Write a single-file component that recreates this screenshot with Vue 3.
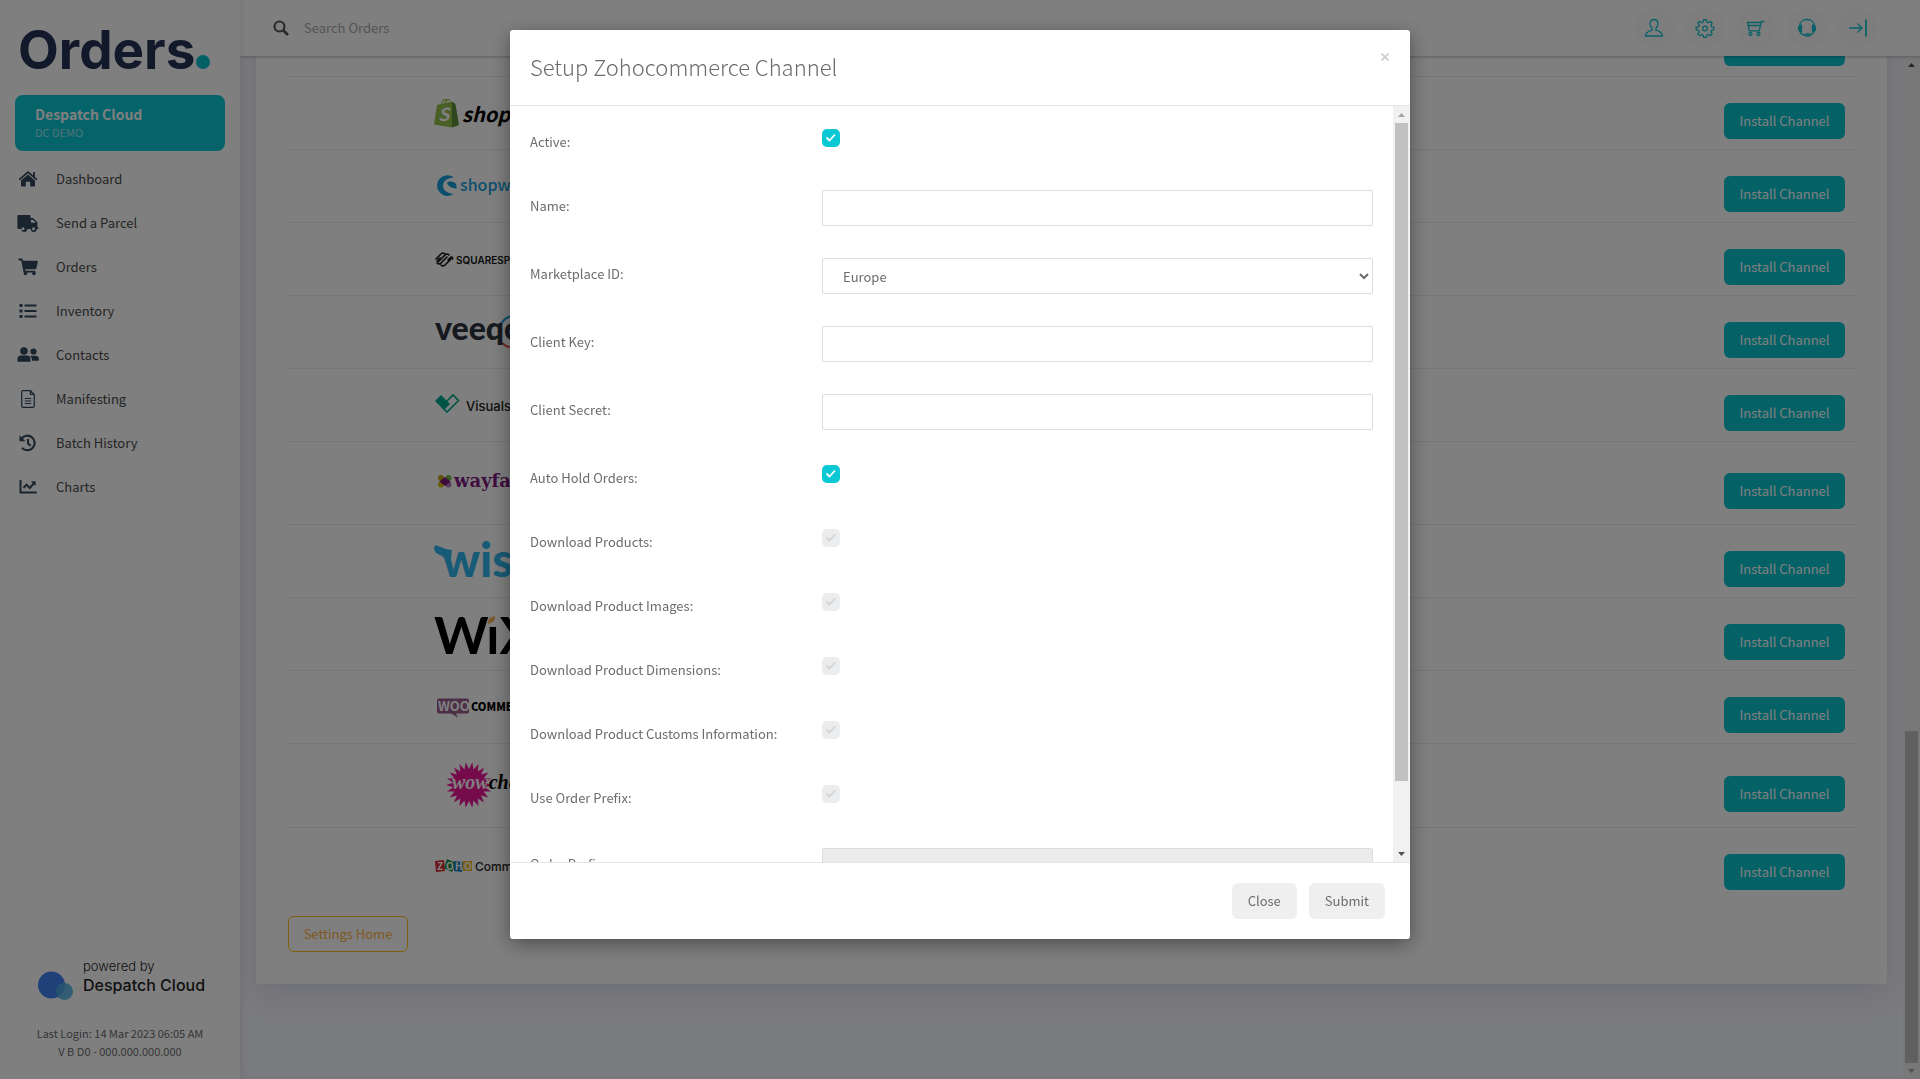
<script setup>
import { ref } from 'vue'

const navItems = [
  { icon: 'home', label: 'Dashboard' },
  { icon: 'truck', label: 'Send a Parcel' },
  { icon: 'cart', label: 'Orders' },
  { icon: 'list', label: 'Inventory' },
  { icon: 'users', label: 'Contacts' },
  { icon: 'file', label: 'Manifesting' },
  { icon: 'history', label: 'Batch History' },
  { icon: 'chart', label: 'Charts' },
]

const tools = [
  { id: 'user', label: 'Account' },
  { id: 'gear', label: 'Settings' },
  { id: 'basket', label: 'Basket' },
  { id: 'headset', label: 'Support' },
  { id: 'exit', label: 'Log out' },
]

const channels = [
  { id: 'previous', height: 52 },
  { id: 'shopify', height: 52 },
  { id: 'shopware', height: 52 },
  { id: 'squarespace', height: 52 },
  { id: 'veeqo', height: 52 },
  { id: 'visualsoft', height: 52 },
  { id: 'wayfair', height: 62 },
  { id: 'wish', height: 52 },
  { id: 'wix', height: 52 },
  { id: 'woocommerce', height: 52 },
  { id: 'wowcher', height: 63 },
  { id: 'zoho', height: 52 },
]

const toggles = [
  { id: 'hold', label: 'Auto Hold Orders:', disabled: false },
  { id: 'products', label: 'Download Products:', disabled: true },
  { id: 'images', label: 'Download Product Images:', disabled: true },
  { id: 'dimensions', label: 'Download Product Dimensions:', disabled: true },
  { id: 'customs', label: 'Download Product Customs Information:', disabled: true },
  { id: 'usePrefix', label: 'Use Order Prefix:', disabled: true },
]

const marketplace = ref('Europe')

const burst = Array.from({ length: 44 }, (_, i) => {
  const r = i % 2 ? 16 : 23
  const a = (i * Math.PI) / 22
  return `${(35 + r * Math.cos(a)).toFixed(1)},${(31 + r * Math.sin(a)).toFixed(1)}`
}).join(' ')
</script>

<template>
  <div class="app">
    <aside class="sidebar">
      <div class="brand">Orders<span class="brand-dot"></span></div>
      <div class="account">
        <strong>Despatch Cloud</strong>
        <span>DC DEMO</span>
      </div>
      <nav class="nav">
        <a v-for="item in navItems" :key="item.label" href="#">
          <svg width="24" height="20" viewBox="0 0 24 20" aria-hidden="true">
            <template v-if="item.icon === 'home'">
              <path d="M12 5.500 5 11.600V17q0 .6.6.6h4.200v-4.800h4.400v4.800h4.200q.6 0 .6-.6v-5.400z" />
              <path d="m3.200 10.600 8.800-7.500 8.800 7.500M18 3v4.500" fill="none" stroke="currentColor" stroke-width="1.800" />
            </template>
            <template v-else-if="item.icon === 'truck'">
              <path fill-rule="evenodd" d="M2.500 2h11q1 0 1 1v2h2.200q.6 0 1 .5l3.300 3.400q.4.4.4 1v4.300h1v1.800h-1.700a3 3 0 0 1-6 0h-3.400a3 3 0 0 1-6 0H2.300q-.9 0-.9-.9V3q0-1 1.100-1zm12.500 4.700v3.100h4.800l-3-3.100z" />
              <circle cx="7" cy="15.800" r="1.500" fill="#fff" />
              <circle cx="17.500" cy="15.800" r="1.500" fill="#fff" />
            </template>
            <template v-else-if="item.icon === 'cart'">
              <path d="M2.500 1.500h3.300q.7 0 .9.700l.3 1.600h14.200q.8 0 .6.9l-1.500 6.800q-.2.700-.9.700H9.200l.3 1.600h9.300q.6 0 .5.700l-.3 1H8.300q-.7 0-.8-.6L5.200 3.500H2.500z" />
              <circle cx="9.500" cy="16.500" r="1.800" /><circle cx="18" cy="16.500" r="1.800" />
            </template>
            <template v-else-if="item.icon === 'list'">
              <path d="M3.500 3h3v3h-3zM3.500 8.500h3v3h-3zM3.500 14h3v3h-3zM8.500 3.500h12v2h-12zM8.500 9h12v2h-12zM8.500 14.500h12v2h-12z" />
            </template>
            <template v-else-if="item.icon === 'users'">
              <circle cx="8" cy="6" r="3.800" /><circle cx="17.500" cy="6.500" r="3.100" />
              <path d="M1.500 16v-2q0-3.500 3.500-3.500h6q3.500 0 3.500 3.500v2q0 .8-.8.800H2.300q-.8 0-.8-.8zM16 15.800h6.200q.6 0 .6-.6V14q0-3.300-3.300-3.300h-3.700q-1 0-1.700.4 1.900 1.300 1.900 4z" />
            </template>
            <template v-else-if="item.icon === 'file'">
              <path d="M14.500 1.700H7Q5.700 1.700 5.700 3v14q0 1.300 1.300 1.300h10q1.300 0 1.300-1.300V5.500zM14.500 1.700v3.800h3.800M8.800 9.500h6.400M8.800 12h6.400M8.800 14.500h6.400" fill="none" stroke="currentColor" stroke-width="1.200" />
            </template>
            <template v-else-if="item.icon === 'history'">
              <path d="M5.600 5.500A7.300 7.300 0 1 1 6 14.900M12 6v4.500l2.700 2.200" fill="none" stroke="currentColor" stroke-width="2.100" />
              <path d="M3.500 2.200v6h6z" />
            </template>
            <template v-else>
              <path d="M4.500 3v12.500h16.200" fill="none" stroke="currentColor" stroke-width="2" />
              <path d="m7.500 10.700 3-3 3.300 3.300 4-4.500" fill="none" stroke="currentColor" stroke-width="2" />
              <path d="M14.800 4.200h4.900v4.900z" />
            </template>
          </svg>
          {{ item.label }}
        </a>
      </nav>
      <div class="sidebar-foot">
        <div class="powered">
          <svg width="36" height="30" viewBox="0 0 36 30" aria-hidden="true">
            <circle cx="13.500" cy="14" r="13.500" fill="#4080f4" />
            <circle cx="26.500" cy="20.500" r="8.500" fill="#4aaee0" opacity=".85" />
          </svg>
          <div>
            <div class="powered-by">powered by</div>
            <div class="powered-name">Despatch Cloud</div>
          </div>
        </div>
        <p>Last Login: 14 Mar 2023 06:05 AM</p>
        <p>V B D0 - 000.000.000.000</p>
      </div>
    </aside>

    <div class="page">
      <header class="topbar">
        <label class="search">
          <svg width="16" height="16" viewBox="0 0 16 16" aria-hidden="true">
            <circle cx="6.500" cy="6.500" r="5" fill="none" stroke="#555" stroke-width="2.200" />
            <path d="m10 10 5 5" stroke="#555" stroke-width="2.600" />
          </svg>
          <input type="text" placeholder="Search Orders" aria-label="Search Orders" />
        </label>
        <div class="tools">
          <button v-for="tool in tools" :key="tool.id" type="button" :aria-label="tool.label">
            <svg width="20" height="20" viewBox="0 0 20 20" fill="none" stroke="currentColor" stroke-width="1.300" aria-hidden="true">
              <path v-if="tool.id === 'user'" d="M10 1.500c2.600 0 3.900 1.700 3.900 4.200 0 2-.9 3.700-2 4.600v1.900c2.800.6 6 2 6.600 5.800h-17c.6-3.800 3.800-5.200 6.600-5.800v-1.900c-1.100-.9-2-2.600-2-4.600 0-2.500 1.300-4.200 3.900-4.200z" />
              <template v-else-if="tool.id === 'gear'">
                <path d="M8.700 1.700h2.600l.5 2.300 1.600.7 2-1.300 1.800 1.800-1.300 2 .7 1.600 2.200.4v2.600l-2.200.5-.7 1.600 1.300 2-1.800 1.800-2-1.300-1.600.7-.5 2.300H8.700l-.5-2.300-1.600-.7-2 1.300-1.800-1.800 1.300-2-.7-1.600-2.200-.5V9.200l2.200-.4.7-1.600-1.300-2 1.800-1.800 2 1.300 1.600-.7z" />
                <circle cx="10" cy="10.500" r="2.300" />
              </template>
              <template v-else-if="tool.id === 'basket'">
                <path d="M18.500 3.500h-3l-2.300 9.300H3.300L1.500 4.500h13.400M2.200 7.500h12" />
                <circle cx="4.500" cy="16" r="1.500" /><circle cx="12.500" cy="16" r="1.500" />
              </template>
              <template v-else-if="tool.id === 'headset'">
                <path d="M2.500 7.500C3 4 6 1.500 10 1.500s7 2.500 7.500 6M2.800 13.500c.7 2 2.700 3.500 5.700 3.500M17.200 13.500c-.7 1.500-1.900 2.800-3.400 3.300" />
                <path d="M4.500 7.200v6.300q-3 0-3-3.100t3-3.200zM15.500 7.200v6.300q3 0 3-3.100t-3-3.200z" fill="currentColor" />
                <rect x="8.500" y="16" width="5" height="2" rx="1" />
              </template>
              <template v-else>
                <path d="M1 10h13M9.500 5.500 14 10l-4.500 4.500" />
                <path d="M18 1.500v17" stroke-width="1.800" />
              </template>
            </svg>
          </button>
        </div>
      </header>

      <div class="viewport">
        <main class="content">
          <section class="card">
            <div v-for="channel in channels" :key="channel.id" class="channel">
              <svg width="180" :height="channel.height" :viewBox="`0 0 180 ${channel.height}`" aria-hidden="true">
                <template v-if="channel.id === 'shopify'">
                  <path d="M7.500 17c1-4.500 3.500-5.500 5.500-4M11 16c1-3 3-4.500 5-2.500" fill="none" stroke="#95bf47" stroke-width="1.200" />
                  <path d="m3 18 15-3.500v26L0 37.500z" fill="#95bf47" />
                  <path d="m18 14.500 3.500 2.500L25 38l-7 2.500z" fill="#5e8e3e" />
                  <text x="4" y="34" class="src" font-size="18" font-weight="700" font-style="italic" fill="#fff">S</text>
                  <text x="28" y="35" class="src" font-size="20" font-weight="700" font-style="italic" fill="#000">shopify</text>
                </template>
                <template v-else-if="channel.id === 'shopware'">
                  <path d="M20 17.500A10.400 10.400 0 1 0 19.500 34C12 33 9 29.500 9 25.500c0-5 5-7.500 11-8z" fill="#189eda" />
                  <path d="M13 22.500c3-2 9-.5 9.500 3v3.500c-3-1-9-2-9.500-6.500z" fill="#189eda" />
                  <text x="26" y="31" class="src" font-size="16" font-weight="500" fill="#189eda">shopware</text>
                </template>
                <template v-else-if="channel.id === 'squarespace'">
                  <g fill="none" stroke="#111" stroke-width="1.600" stroke-linecap="round">
                    <path d="m2 26 5-5q2-2 4 0M4 29l7-7q2-2 4 0" />
                    <path d="m6 25-3 3M13 24l-6 6q-2 2-4 0M17 26l-6 6q-2 2-4 0M14 27l3-3q2 0 1.500 2" />
                  </g>
                  <text x="22" y="31" font-family="Inter, sans-serif" font-size="10" font-weight="600" fill="#111">SQUARESPACE</text>
                </template>
                <template v-else-if="channel.id === 'veeqo'">
                  <path d="M66 20c3-7 10-11 19-11" fill="none" stroke="#189eda" stroke-width="2" />
                  <path d="M68 37c4 4 9 5 15 5" fill="none" stroke="#e0533d" stroke-width="2" />
                  <text x="1" y="34" font-family="Lato, sans-serif" font-size="32" font-weight="900" fill="#2c353f">veeqo</text>
                </template>
                <template v-else-if="channel.id === 'visualsoft'">
                  <path d="m1 22 6-6 6 6 3 3-6 6z" fill="#00a88f" />
                  <path d="m12 23 7-7 5.500 5.500L13 33l-5-5" fill="none" stroke="#00a88f" stroke-width="1.600" />
                  <text x="32" y="32" font-family="Inter, sans-serif" font-size="13" font-weight="500" fill="#222">Visualsoft</text>
                </template>
                <template v-else-if="channel.id === 'wayfair'">
                  <circle cx="7" cy="26" r="3" fill="#b9a70d" /><circle cx="14.500" cy="26" r="3" fill="#72b84c" />
                  <circle cx="7" cy="32.500" r="3" fill="#d5b900" /><circle cx="14.500" cy="32.500" r="3" fill="#b47abd" />
                  <path d="m11 25 5.500 4.500L11 34l-5.500-4.500z" fill="#7f187f" />
                  <text x="20" y="35" font-family="DejaVu Serif, serif" font-size="18" font-weight="700" fill="#7f187f">wayfair</text>
                </template>
                <template v-else-if="channel.id === 'wish'">
                  <path d="M0 13q1-4 4-2 6 3 14 4l-1 9-6 1q-1-4-5-5-6-2-6-7z" fill="#2fb7ec" />
                  <text x="8" y="42" font-family="Lato, sans-serif" font-size="47" font-weight="900" fill="#2fb7ec">wish</text>
                </template>
                <template v-else-if="channel.id === 'wix'">
                  <text x="0" y="46" font-family="Lato, sans-serif" font-size="52" font-weight="700" fill="#000">W&#305;X</text>
                  <path d="M54 16q-1-7 7-8 1 6-7 8z" fill="#fbb364" />
                </template>
                <template v-else-if="channel.id === 'woocommerce'">
                  <path d="M5 17.500h28q2 0 2 2v11q0 2-2 2H22l2 4-7-4H5q-2 0-2-2v-11q0-2 2-2z" fill="#9b5c8f" />
                  <text x="4" y="30" class="src" font-size="13" font-weight="700" fill="#fff">WOO</text>
                  <text x="37" y="30" class="src" font-size="11" font-weight="900" fill="#000">COMMERCE</text>
                </template>
                <template v-else-if="channel.id === 'wowcher'">
                  <polygon :points="burst" fill="#ec1699" />
                  <text x="18" y="35" font-family="Liberation Serif, serif" font-size="20" font-weight="700" font-style="italic" fill="#fff">wow<tspan fill="#000">cher</tspan></text>
                </template>
                <template v-else-if="channel.id === 'zoho'">
                  <path d="m1 23 9-1 1 11-9 1z" fill="#d8292f" /><path d="m13 21 9 4-4 9-8-4z" fill="#149447" />
                  <path d="m20 23 9 1-1 10-8-1z" fill="#1b7fc4" /><path d="M29 23h9v10h-9z" fill="#f0b71c" />
                  <g class="src" font-size="10" font-weight="700" fill="#fff">
                    <text x="3" y="32">Z</text><text x="12" y="32">O</text><text x="21" y="32">H</text><text x="30" y="32">O</text>
                  </g>
                  <text x="41" y="33" font-family="Inter, sans-serif" font-size="12" font-weight="500" fill="#222">Commerce</text>
                </template>
              </svg>
              <button type="button" class="btn btn-install">Install Channel</button>
            </div>
            <button type="button" class="btn btn-home">Settings Home</button>
          </section>
        </main>
        <div class="scrollbar" aria-hidden="true">
          <i class="arrow up"></i>
          <div class="track"><div class="thumb" :style="{ marginTop: '658px', height: '332px' }"></div></div>
          <i class="arrow down faint"></i>
        </div>
      </div>
    </div>

    <div class="backdrop">
      <form class="modal" role="dialog" aria-labelledby="modal-title" @submit.prevent>
        <div class="modal-head">
          <h1 id="modal-title">Setup Zohocommerce Channel</h1>
          <button type="button" class="dismiss" aria-label="Close dialog">
            <svg width="8" height="8" viewBox="0 0 8 8" aria-hidden="true"><path d="m.5.5 7 7m0-7-7 7" stroke="#ccc" stroke-width="1.600" /></svg>
          </button>
        </div>
        <div class="modal-body">
          <div class="fields">
            <div class="field">
              <label for="active">Active:</label>
              <input id="active" type="checkbox" checked />
            </div>
            <div class="field">
              <label for="name">Name:</label>
              <input id="name" type="text" />
            </div>
            <div class="field">
              <label for="marketplace">Marketplace ID:</label>
              <select id="marketplace" v-model="marketplace"><option>Europe</option></select>
            </div>
            <div class="field">
              <label for="key">Client Key:</label>
              <input id="key" type="text" />
            </div>
            <div class="field">
              <label for="secret">Client Secret:</label>
              <input id="secret" type="text" />
            </div>
            <div class="toggles">
              <div v-for="toggle in toggles" :key="toggle.id" class="field">
                <label :for="toggle.id">{{ toggle.label }}</label>
                <input :id="toggle.id" type="checkbox" checked :disabled="toggle.disabled" />
              </div>
            </div>
            <div class="field">
              <label for="prefix">Order Prefix:</label>
              <input id="prefix" type="text" disabled />
            </div>
          </div>
          <div class="scrollbar" aria-hidden="true">
            <i class="arrow up faint"></i>
            <div class="track"><div class="thumb" :style="{ height: '658px' }"></div></div>
            <i class="arrow down"></i>
          </div>
        </div>
        <div class="modal-foot">
          <button type="button" class="btn btn-plain">Close</button>
          <button type="submit" class="btn btn-plain">Submit</button>
        </div>
      </form>
    </div>
  </div>
</template>

<style>
body {
  margin: 0;
}
</style>

<style scoped>
.app,
.app * {
  box-sizing: border-box;
}
.app {
  display: flex;
  height: 100vh;
  overflow: hidden;
  background: #f5f6fd;
  color: #6c6c6c;
  font: 13px/20px "Noto Sans CJK SC", sans-serif;
}
.app button,
.app input,
.app select {
  font: inherit;
  color: inherit;
}
.src {
  font-family: "Noto Sans CJK SC", sans-serif;
}

/* Sidebar */
.sidebar {
  display: flex;
  flex-direction: column;
  flex: 0 0 240px;
  background: #fff;
  box-shadow: 0 0 8px rgba(40, 50, 90, 0.14);
  z-index: 2;
}
.brand {
  display: flex;
  align-items: baseline;
  height: 95px;
  padding: 18px 0 0 18px;
  color: #243357;
  font: 700 53px/64px Inter, sans-serif;
}
.brand-dot {
  width: 14px;
  height: 14px;
  margin-left: 1px;
  border-radius: 50%;
  background: #06c0c8;
}
.account {
  display: flex;
  flex-direction: column;
  height: 56px;
  margin: 0 15px;
  padding: 9px 20px;
  border-radius: 8px;
  background: #0ac8d4;
  color: #fff;
}
.account strong {
  font-size: 14px;
  line-height: 20px;
}
.account span {
  font-size: 11px;
  line-height: 16px;
  opacity: 0.6;
}
.nav {
  display: flex;
  flex-direction: column;
  margin-top: 6px;
}
.nav a {
  display: flex;
  align-items: center;
  gap: 16px;
  height: 44px;
  padding-left: 16px;
  color: #4a4a4a;
  text-decoration: none;
}
.nav svg {
  color: #34495e;
  fill: currentColor;
}
.sidebar-foot {
  margin-top: auto;
  padding-bottom: 19px;
  text-align: center;
}
.sidebar-foot p {
  margin: 0;
  font-size: 11px;
  line-height: 18px;
}
.powered {
  display: flex;
  align-items: flex-end;
  gap: 9px;
  padding-left: 38px;
  margin-bottom: 23px;
  color: #222;
  text-align: left;
  font-family: Inter, sans-serif;
}
.powered-by {
  font-size: 13px;
  line-height: 18px;
  font-weight: 300;
}
.powered-name {
  padding-bottom: 6px;
  font-size: 16px;
  line-height: 20px;
  font-weight: 500;
}

/* Top bar */
.page {
  display: flex;
  flex: 1;
  flex-direction: column;
  min-width: 0;
}
.topbar {
  display: flex;
  align-items: center;
  justify-content: space-between;
  flex: 0 0 56px;
  padding: 0 42px 0 33px;
  background: #fff;
  box-shadow: 0 1px 3px rgba(0, 0, 0, 0.25);
  z-index: 1;
}
.search {
  display: flex;
  align-items: center;
  gap: 15px;
}
.search input {
  width: 200px;
  padding: 0;
  border: 0;
  background: none;
}
.search input::placeholder {
  color: #aaa;
}
.tools {
  display: flex;
  gap: 11px;
}
.app .tools button {
  display: grid;
  place-items: center;
  width: 40px;
  height: 40px;
  padding: 0;
  border: 0;
  border-radius: 50%;
  background: #fafafa;
  color: #14c4d0;
}

/* Channel list */
.viewport {
  display: flex;
  flex: 1;
  min-height: 0;
}
.content {
  display: flex;
  flex: 1;
  flex-direction: column;
  justify-content: flex-end;
  padding: 0 16px 95px;
  overflow: hidden;
}
.card {
  padding: 32px;
  border-radius: 2px;
  background: #fff;
  box-shadow: 0 8px 30px rgba(40, 50, 90, 0.12);
}
.channel {
  display: flex;
  align-items: center;
  justify-content: space-between;
  padding: 10px 10px 10px 146px;
  border-top: 1px solid #ebebeb;
}
.channel svg {
  display: block;
  overflow: visible;
}
.channel .btn {
  margin-top: 16px;
}
.btn {
  height: 36px;
  padding: 0;
  border: 1px solid transparent;
  border-radius: 6px;
}
.app .btn-install {
  width: 121px;
  background: #08c4ce;
  color: #fff;
}
.app .btn-home {
  width: 120px;
  margin-top: 16px;
  border-color: #fdbe12;
  background: none;
  color: #fdb13c;
}

/* Scrollbars */
.scrollbar {
  display: flex;
  flex: 0 0 17px;
  flex-direction: column;
  align-items: center;
  background: #f1f1f1;
}
.track {
  flex: 1;
  min-height: 0;
  width: 13px;
}
.thumb {
  background: #c1c1c1;
}
.arrow {
  width: 7px;
  height: 4px;
  margin: 7px 0 6px;
  background: #505050;
}
.arrow.up {
  clip-path: polygon(50% 0, 100% 100%, 0 100%);
}
.arrow.down {
  clip-path: polygon(0 0, 100% 0, 50% 100%);
}
.arrow.faint {
  background: #a3a3a3;
}

/* Dialog */
.backdrop {
  position: fixed;
  inset: 0;
  z-index: 10;
  display: flex;
  align-items: flex-start;
  justify-content: center;
  padding-top: 30px;
  background: rgba(0, 0, 0, 0.5);
}
.modal {
  width: 900px;
  max-width: 100%;
  border-radius: 3px;
  background: #fff;
  box-shadow: 0 5px 20px rgba(0, 0, 0, 0.4);
}
.modal-head {
  display: flex;
  align-items: flex-start;
  justify-content: space-between;
  padding: 18px 20px 21px;
  border-bottom: 1px solid #e5e5e5;
}
.modal-head h1 {
  margin: 0;
  font-size: 22px;
  line-height: 36px;
  font-weight: 300;
}
.dismiss {
  display: grid;
  place-items: center;
  width: 10px;
  height: 18px;
  padding: 0;
  border: 0;
  background: none;
}
.modal-body {
  display: flex;
  height: calc(100vh - 323px);
  overflow: hidden;
}
.fields {
  flex: 1;
  padding: 20px;
  overflow: hidden;
}
.field {
  display: grid;
  grid-template-columns: 292px 1fr;
  height: 36px;
  margin-bottom: 32px;
}
.field:has(input[type="checkbox"]) {
  height: 32px;
}
.toggles {
  padding-bottom: 2px;
}
.field label {
  padding-top: 6px;
}
.field input[type="text"],
.field select {
  width: 100%;
  height: 36px;
  padding: 0 16px;
  border: 1px solid #ddd;
  border-radius: 2px;
  background: #fff;
}
.field input:disabled {
  background: #ebebeb;
}
.field input[type="checkbox"] {
  appearance: none;
  width: 18px;
  height: 18px;
  margin: 3px 0 0;
  border-radius: 5px;
  background: #0ac8d4 url("data:image/svg+xml,%3Csvg xmlns='http://www.w3.org/2000/svg' viewBox='0 0 18 18'%3E%3Cpath d='m4.500 8.500 3 3 5.500-6' fill='none' stroke='%23fff' stroke-width='1.800'/%3E%3C/svg%3E");
}
.field input[type="checkbox"]:disabled {
  background: #ebeced url("data:image/svg+xml,%3Csvg xmlns='http://www.w3.org/2000/svg' viewBox='0 0 18 18'%3E%3Cpath d='m4.500 8.500 3 3 5.500-6' fill='none' stroke='%23d5d5d5' stroke-width='1.800'/%3E%3C/svg%3E");
}
.modal-foot {
  display: flex;
  justify-content: flex-end;
  gap: 12px;
  padding: 20px 25px 20px 20px;
  border-top: 1px solid #e5e5e5;
}
.btn-plain {
  padding: 0 15px;
  background: #efefef;
}
</style>
